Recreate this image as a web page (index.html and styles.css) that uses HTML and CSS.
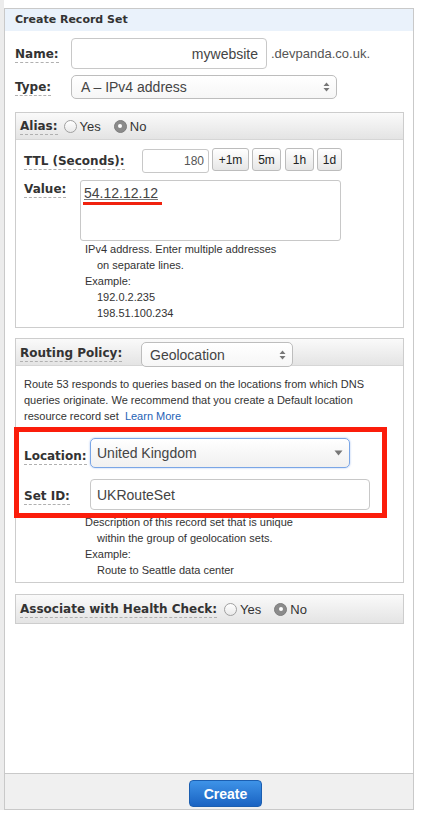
FILE: index.html
```html
<!DOCTYPE html>
<html>
<head>
<meta charset="utf-8">
<link rel="stylesheet" href="styles.css">
</head>
<body>
<div class="page">
  <div class="panel">
    <div class="panel-head">Create Record Set</div>
    <div class="panel-body">
      <div class="row row-name">
        <span class="lbl w-name"><span class="dash">Name:</span></span>
        <div class="input input-name">mywebsite</div>
        <span class="suffix">.devpanda.co.uk.</span>
      </div>
      <div class="row row-type">
        <span class="lbl w-name"><span class="dash">Type:</span></span>
        <div class="select select-type">
          <span>A – IPv4 address</span>
          <svg class="updown" width="7" height="10" viewBox="0 0 7 10"><path d="M3.5 0.5 L6.5 4 L0.5 4 Z M3.5 9.5 L6.5 6 L0.5 6 Z" fill="#777"/></svg>
        </div>
      </div>

      <div class="section sec-alias">
        <div class="sec-head">
          <span class="lbl"><span class="dash">Alias:</span></span>
          <span class="radio rd-first"></span><span class="rtext">Yes</span>
          <span class="radio checked rd-second"></span><span class="rtext">No</span>
        </div>
        <div class="sec-body body-alias">
          <div class="row row-ttl">
            <span class="lbl w-ttl"><span class="dash">TTL (Seconds):</span></span>
            <div class="input input-ttl">180</div>
            <div class="btn b-1m">+1m</div>
            <div class="btn b-5m">5m</div>
            <div class="btn b-1h">1h</div>
            <div class="btn b-1d">1d</div>
          </div>
          <div class="row row-value">
            <span class="lbl w-value"><span class="dash">Value:</span></span>
            <div class="textarea"><span class="ip">54.12.12.12</span></div>
          </div>
          <div class="help help-value">
            <div>IPv4 address. Enter multiple addresses</div>
            <div class="ind">on separate lines.</div>
            <div>Example:</div>
            <div class="ind">192.0.2.235</div>
            <div class="ind">198.51.100.234</div>
          </div>
        </div>
      </div>

      <div class="section sec-routing">
        <div class="sec-head head-routing">
          <span class="lbl w-routing"><span class="dash">Routing Policy:</span></span>
          <div class="select select-geo">
            <span>Geolocation</span>
            <svg class="updown" width="7" height="10" viewBox="0 0 7 10"><path d="M3.5 0.5 L6.5 4 L0.5 4 Z M3.5 9.5 L6.5 6 L0.5 6 Z" fill="#777"/></svg>
          </div>
        </div>
        <div class="sec-body body-routing">
          <div class="desc">Route 53 responds to queries based on the locations from which DNS<br>queries originate. We recommend that you create a Default location<br>resource record set&nbsp; <span class="link">Learn More</span></div>
          <div class="redbox">
            <div class="row row-loc">
              <span class="lbl w-loc lbl-loc"><span class="dash">Location:</span></span>
              <div class="select select-loc">
                <span>United Kingdom</span>
                <svg class="down" width="9" height="6" viewBox="0 0 9 6"><path d="M0.5 0.5 L8.5 0.5 L4.5 5.5 Z" fill="#777"/></svg>
              </div>
            </div>
            <div class="row row-setid">
              <span class="lbl w-loc lbl-setid"><span class="dash">Set ID:</span></span>
              <div class="input input-setid">UKRouteSet</div>
            </div>
          </div>
          <div class="help help-setid">
            <div>Description of this record set that is unique</div>
            <div class="ind">within the group of geolocation sets.</div>
            <div>Example:</div>
            <div class="ind">Route to Seattle data center</div>
          </div>
        </div>
      </div>

      <div class="section sec-health">
        <div class="sec-head head-health">
          <span class="lbl"><span class="dash">Associate with Health Check:</span></span>
          <span class="radio rd-first-h"></span><span class="rtext">Yes</span>
          <span class="radio checked rd-second"></span><span class="rtext">No</span>
        </div>
      </div>
    </div>
    <div class="panel-foot">
      <div class="create">Create</div>
    </div>
  </div>
</div>
</body>
</html>
```
FILE: styles.css
```css
* { box-sizing: border-box; }
html, body { margin: 0; padding: 0; background: #fff; }
body { font-family: "Liberation Sans", Arial, sans-serif; color: #333; }

.page {
  width: 427px;
  height: 810px;
  border-left: 4px solid #ececec;
  padding-top: 8px;
}

.panel {
  width: 410px;
  height: 802px;
  border: 1px solid #c9c9c9;
  display: flex;
  flex-direction: column;
  background: #fff;
}
.panel-head {
  height: 22px;
  line-height: 22px;
  background: #eaf2fb;
  padding-left: 10px;
  font-family: "DejaVu Sans", Verdana, sans-serif;
  font-weight: bold;
  font-size: 11px;
  color: #333;
}
.panel-body {
  flex: 1;
  padding: 0 9px 0 10px;
}
.panel-foot {
  height: 36px;
  border-top: 1px solid #c9c9c9;
  background: #f0f0f0;
  padding-left: 184px;
  padding-top: 6px;
}

.row { display: flex; align-items: center; }
.lbl {
  font-family: "DejaVu Sans", Verdana, sans-serif;
  font-weight: bold;
  font-size: 12px;
  color: #333;
  flex: none;
  white-space: nowrap;
}
.dash { border-bottom: 1px dashed #b0b0b0; padding-bottom: 1px; }
.w-name { width: 56px; }
.w-ttl { width: 118px; }
.w-value { width: 56px; }
.w-routing { width: 121px; }
.w-loc { width: 66px; }
.lbl-loc { padding-top: 6px; }
.lbl-setid { padding-top: 3px; }

.input {
  border: 1px solid #c8c8c8;
  border-radius: 4px;
  background: #fff;
  font-size: 14px;
  color: #444;
  display: flex;
  align-items: center;
}
.row-name { margin-top: 7px; }
.input-name {
  width: 196px;
  height: 31px;
  justify-content: flex-end;
  padding-right: 8px;
}
.suffix { margin-left: 4px; font-size: 13px; color: #555; }

.select {
  border: 1px solid #bdbdbd;
  border-radius: 5px;
  background: linear-gradient(#ffffff, #f6f6f6);
  font-size: 14px;
  color: #444;
  display: flex;
  align-items: center;
  justify-content: space-between;
}
.row-type { margin-top: 6px; }
.select-type {
  width: 266px;
  height: 24px;
  padding: 0 6px 0 9px;
}
.updown { flex: none; }

.section {
  border: 1px solid #cdcdcd;
  width: 389px;
}
.sec-alias { margin-top: 13px; }
.sec-head {
  height: 27px;
  background: linear-gradient(#fafafa, #e4e4e4);
  border-bottom: 1px solid #d6d6d6;
  padding-left: 4px;
  display: flex;
  align-items: center;
}
.sec-body { padding: 0 8px; }

.radio {
  width: 13px;
  height: 13px;
  border-radius: 50%;
  border: 1px solid #a0a0a0;
  background: linear-gradient(#ffffff, #e9e9e9);
  flex: none;
  display: flex;
  align-items: center;
  justify-content: center;
}
.radio.checked {
  background: #8b8b8b;
  border-color: #7d7d7d;
}
.radio.checked::after {
  content: "";
  width: 4px;
  height: 4px;
  border-radius: 50%;
  background: #fff;
}
.rtext { font-size: 13px; color: #333; margin-left: 3px; }
.rd-first { margin-left: 6px; }
.rd-second { margin-left: 13px; }
.rd-first-h { margin-left: 7px; }

.body-alias { padding-top: 8px; padding-bottom: 6px; }
.row-ttl { height: 25px; }
.input-ttl {
  width: 67px;
  height: 24px;
  justify-content: flex-end;
  padding-right: 4px;
  font-size: 12px;
  color: #555;
  border-radius: 3px;
}
.btn {
  height: 23px;
  border: 1px solid #bcbcbc;
  border-radius: 3px;
  background: linear-gradient(#ffffff, #e6e6e6);
  font-size: 12px;
  color: #222;
  display: flex;
  align-items: center;
  justify-content: center;
  margin-left: 3px;
  margin-top: -2px;
}
.b-1m { width: 37px; }
.b-5m { width: 29px; }
.b-1h { width: 29px; margin-left: 4px; }
.b-1d { width: 25px; }

.row-value { margin-top: 7px; align-items: flex-start; }
.w-value { padding-top: 2px; }
.textarea {
  width: 261px;
  height: 61px;
  border: 1px solid #c8c8c8;
  border-radius: 3px;
  padding: 4px 3px;
  font-size: 14px;
  color: #444;
}
.ip {
  display: inline-block;
  text-decoration: underline;
  text-decoration-color: #777;
  border-bottom: 3px solid #f0220e;
  padding-right: 4px;
  margin-left: -1px;
  padding-left: 1px;
  line-height: 16px;
  padding-bottom: 1px;
}

.help {
  font-size: 11px;
  line-height: 16px;
  color: #333;
  margin-left: 61px;
  white-space: nowrap;
}
.ind { padding-left: 12px; }

.sec-routing { margin-top: 10px; }
.head-routing { align-items: flex-start; }
.head-routing .lbl { margin-top: 7px; }
.select-geo {
  width: 152px;
  height: 25px;
  margin-top: 3px;
  padding: 0 6px 0 8px;
}
.body-routing { padding-top: 10px; padding-bottom: 4px; }
.desc {
  font-size: 11px;
  line-height: 16px;
  color: #333;
  white-space: nowrap;
}
.link { color: #1f63b6; }

.redbox {
  margin-top: 3px;
  margin-left: -10px;
  width: 373px;
  border: 5px solid #fb1d0b;
  padding: 6px 0 3px 5px;
}
.select-loc {
  width: 260px;
  height: 30px;
  border: 1px solid #7aa6e6;
  box-shadow: 0 0 2px rgba(90, 140, 230, 0.6);
  background: linear-gradient(#ffffff, #f0f0f0);
  padding: 0 6px 0 6px;
  font-size: 14px;
  color: #444;
}
.row-setid { margin-top: 11px; }
.input-setid {
  width: 280px;
  height: 31px;
  padding-left: 6px;
}
.help-setid { margin-top: -4px; }

.sec-health { margin-top: 11px; }
.head-health { height: 28px; border-bottom: none; }

.create {
  width: 73px;
  height: 27px;
  border: 1px solid #1b5eb0;
  border-radius: 4px;
  background: linear-gradient(#3e93e8, #1a63c2);
  color: #fff;
  font-weight: bold;
  font-size: 14px;
  display: flex;
  align-items: center;
  justify-content: center;
}
```
